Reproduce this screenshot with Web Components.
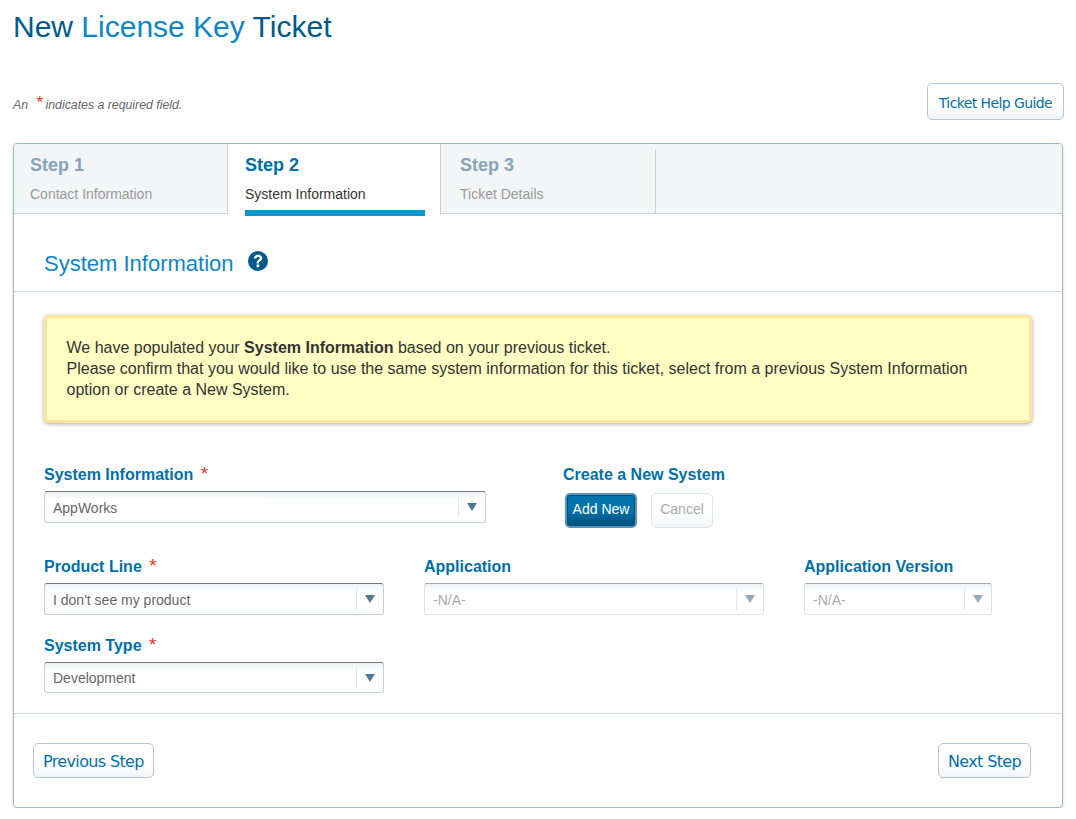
<!DOCTYPE html>
<html lang="en">
<head>
<meta charset="utf-8">
<title>New License Key Ticket</title>
<style>
    html, body { margin: 0; background: #fff; }
    body { font-family: "Liberation Sans", Arial, sans-serif; color: #333; }
</style>
</head>
<body>
<ticket-page>
    <ticket-title slot="title">New <em>License Key</em> Ticket</ticket-title>
    <ticket-button slot="help" size="small">Ticket Help Guide</ticket-button>

    <step-tab step="Step 1" slot="tabs">Contact Information</step-tab>
    <step-tab step="Step 2" slot="tabs" active>System Information</step-tab>
    <step-tab step="Step 3" slot="tabs" last>Ticket Details</step-tab>

    <notice-box slot="notice">
        We have populated your <b>System Information</b> based on your previous ticket.<br>
        Please confirm that you would like to use the same system information for this ticket, select from a previous System Information option or create a New System.
    </notice-box>

    <system-form slot="form"></system-form>

    <ticket-button slot="previous">Previous Step</ticket-button>
    <ticket-button slot="next">Next Step</ticket-button>
</ticket-page>

<script>
class TicketPage extends HTMLElement {
    constructor() {
        super();
        this.attachShadow({ mode: "open" });
        this.shadowRoot.innerHTML = `
            <style>
            :host { display: block; padding: 0 12px 0 13px; width: 1051px; }
            header { height: 83px; }
            .required-row {
                display: flex; justify-content: space-between; align-items: flex-start;
                height: 60px;
            }
            .note {
                font: italic 12.3px/14px "Liberation Sans", Arial, sans-serif;
                color: #666; padding-top: 14px;
            }
            .note span {
                color: #f0311e; font: normal 17px/14px "Liberation Sans", Arial, sans-serif;
                margin: 0 -1px 0 5px; position: relative; top: -1px;
            }
            .panel {
                width: 1048px; height: 663px;
                border: 1px solid #a3b8c4; border-radius: 4px;
                box-shadow: 0 1px 3px rgba(90, 120, 140, .3);
                display: flex; flex-direction: column;
            }
            .tabs {
                display: flex; height: 70px;
                background: #f3f6f7; border-radius: 3px 3px 0 0;
                box-shadow: inset 0 -1px 0 #c5d3dc;
            }
            .section-head {
                height: 78px; box-sizing: border-box;
                border-bottom: 1px solid #d5dade;
                display: flex; align-items: flex-start;
                padding: 37px 0 0 30px; gap: 14px;
            }
            h2 {
                margin: 0; font: 22px/26px "Liberation Sans", Arial, sans-serif;
                color: #0d86c8;
            }
            svg { display: block; }
            .body { padding: 23px 30px 0 30px; height: 422px; box-sizing: border-box; border-bottom: 1px solid #d5dade; }
            .actions { display: flex; justify-content: space-between; padding: 29px 31px 0 19px; }
            </style>
            <header><slot name="title"></slot></header>
            <div class="required-row">
                <div class="note">An <span>*</span> indicates a required field.</div>
                <slot name="help"></slot>
            </div>
            <div class="panel">
                <div class="tabs"><slot name="tabs"></slot></div>
                <div class="section-head">
                    <h2>System Information</h2>
                    <svg width="20" height="20" viewBox="0 0 20 20">
                        <circle cx="10" cy="10" r="10" fill="#005a8c"/>
                        <path transform="translate(10 10) scale(1.2) translate(-10 -9.7)" d="M6.6 7.6c.2-2 1.6-3.1 3.5-3.1 2 0 3.4 1.1 3.4 2.9 0 1.3-.7 2-1.7 2.6-.8.5-1 .8-1 1.7H8.9c-.1-1.4.3-2.1 1.3-2.8.8-.5 1.2-.9 1.2-1.5 0-.7-.5-1.1-1.3-1.1-.9 0-1.4.5-1.5 1.3z M8.8 12.6H11v2.3H8.8z" fill="#fff"/>
                    </svg>
                </div>
                <div class="body">
                    <slot name="notice"></slot>
                    <slot name="form"></slot>
                </div>
                <div class="actions">
                    <slot name="previous"></slot>
                    <slot name="next"></slot>
                </div>
            </div>
        `;
    }
}

class TicketTitle extends HTMLElement {
    constructor() {
        super();
        this.attachShadow({ mode: "open" });
        this.shadowRoot.innerHTML = `
            <style>
            :host {
                display: block; padding-top: 9px;
                font: 30px/36px "Liberation Sans", Arial, sans-serif; color: #005a8c;
            }
            ::slotted(em) { font-style: normal; color: #0d86c8; }
            </style>
            <slot></slot>
        `;
    }
}

class TicketButton extends HTMLElement {
    constructor() {
        super();
        this.attachShadow({ mode: "open" });
        this.shadowRoot.innerHTML = `
            <style>
            :host {
                display: inline-block; box-sizing: border-box;
                height: 35px; padding: 0 9px;
                border: 1px solid #b4c6d3; border-radius: 5px;
                background: linear-gradient(#fff 55%, #f1f5f8);
                color: #0070aa;
                font: 16px/35px "DejaVu Sans", Verdana, sans-serif;
                letter-spacing: -.64px; white-space: nowrap;
            }
            :host([size="small"]) { height: 37px; padding: 0 11px; font-size: 14px; line-height: 38px; letter-spacing: -.6px; }
            :host([primary]) {
                width: 72px; padding: 0; text-align: center;
                font: 14px/29px "Liberation Sans", Arial, sans-serif; letter-spacing: 0;
                color: #fff; border: 2px solid #5a93b5; border-radius: 5px;
                background: linear-gradient(#0274ad 45%, #004f7d);
                box-shadow: inset 0 0 0 1px #02507f;
            }
            :host([disabled]) {
                width: 62px; padding: 0; text-align: center;
                font: 14px/31px "Liberation Sans", Arial, sans-serif; letter-spacing: 0;
                color: #aaa; border-color: #dfe5ea;
            }
            </style>
            <slot></slot>
        `;
    }
}

class StepTab extends HTMLElement {
    constructor() {
        super();
        this.attachShadow({ mode: "open" });
        this.shadowRoot.innerHTML = `
            <style>
            :host {
                display: block; box-sizing: border-box; position: relative;
                width: 214px; height: 70px; padding: 10px 0 0 16px;
                border-right: 1px solid #c5d3dc;
            }
            :host([last]) { width: 215px; margin-top: 5px; height: 64px; padding: 5px 0 0 19px; }
            .step {
                font: bold 18px/22px "Liberation Sans", Arial, sans-serif; color: #8aa3b5;
            }
            .name {
                margin-top: 9px;
                font: 14px/18px "Liberation Sans", Arial, sans-serif; color: #999;
            }
            :host([active]) {
                background: #fff; width: 213px; padding-left: 17px;
                height: 71px;
            }
            :host([active]) .step { color: #0070aa; }
            :host([active]) .name { color: #333; }
            :host([active]) .bar {
                position: absolute; left: 17px; top: 66px;
                width: 180px; height: 6px; background: #0099cc;
            }
            </style>
            <div class="step"></div>
            <div class="name"><slot></slot></div>
            <div class="bar"></div>
        `;
        this.shadowRoot.querySelector(".step").textContent = this.getAttribute("step");
    }
}

class NoticeBox extends HTMLElement {
    constructor() {
        super();
        this.attachShadow({ mode: "open" });
        this.shadowRoot.innerHTML = `
            <style>
            :host {
                display: block; box-sizing: border-box;
                width: 988px; height: 108px; padding: 19px 20px 0 19.5px;
                background: #ffffc4; border: 3px solid #fde59c; border-radius: 5px;
                box-shadow: 0 1px 4px rgba(0, 0, 0, .35);
                font: 16px/21px "Liberation Sans", Arial, sans-serif; color: #333;
            }
            </style>
            <slot></slot>
        `;
    }
}

class FormSelect extends HTMLElement {
    constructor() {
        super();
        this.attachShadow({ mode: "open" });
        this.shadowRoot.innerHTML = `
            <style>
            :host {
                display: flex; box-sizing: border-box; height: 32px;
                border: 1px solid #c9ced2; border-top-color: #777; border-radius: 3px;
                background: linear-gradient(#eef1f2, #fff 8px);
                font: 14px/33px "Liberation Sans", Arial, sans-serif; color: #666;
            }
            :host([disabled]) { border-color: #dfe2e4; border-top-color: #aaa; color: #aaa; }
            .value { flex: 1; padding-left: 8px; white-space: nowrap; overflow: hidden; }
            .arrow {
                width: 26px; margin: 4px 0; border-left: 1px solid #e2e7ea;
                display: flex; align-items: center; justify-content: center;
            }
            .arrow i {
                border: 5px solid transparent; border-width: 8px 5.5px 0;
                border-top-color: #4f7a96;
            }
            :host([disabled]) .arrow i { border-top-color: #8fabbd; }
            </style>
            <div class="value"><slot></slot></div>
            <div class="arrow"><i></i></div>
        `;
    }
}

class FormField extends HTMLElement {
    constructor() {
        super();
        this.attachShadow({ mode: "open" });
        this.shadowRoot.innerHTML = `
            <style>
            :host { display: block; }
            label {
                display: block; height: 27px; box-sizing: border-box; padding-top: 1px;
                font: bold 16px/20px "Liberation Sans", Arial, sans-serif; color: #0070aa;
                white-space: nowrap;
            }
            span {
                color: #f0311e; font: normal 19px/0 "Liberation Sans", Arial, sans-serif;
                margin-left: 3px;
            }
            </style>
            <label></label>
            <slot></slot>
        `;
        const label = this.shadowRoot.querySelector("label");
        label.textContent = this.getAttribute("label");
        if (this.hasAttribute("required")) {
            const star = document.createElement("span");
            star.textContent = "*";
            label.append(" ", star);
        }
    }
}

class SystemForm extends HTMLElement {
    constructor() {
        super();
        this.attachShadow({ mode: "open" });
        this.shadowRoot.innerHTML = `
            <style>
            :host { display: block; padding-top: 41px; }
            .top { display: flex; gap: 77px; height: 92px; }
            .top form-field:first-child { width: 442px; }
            .create { display: flex; gap: 14px; padding: 2px 0 0 2px; }
            .grid { display: grid; grid-template-columns: 340px 340px 188px; column-gap: 40px; }
            .second { margin-top: 20px; width: 340px; }
            .second form-select { height: 31px; line-height: 31px; }
            </style>
            <div class="top">
                <form-field label="System Information" required>
                    <form-select>AppWorks</form-select>
                </form-field>
                <form-field label="Create a New System">
                    <div class="create">
                        <ticket-button primary>Add New</ticket-button>
                        <ticket-button disabled>Cancel</ticket-button>
                    </div>
                </form-field>
            </div>
            <div class="grid">
                <form-field label="Product Line" required>
                    <form-select>I don't see my product</form-select>
                </form-field>
                <form-field label="Application">
                    <form-select disabled>-N/A-</form-select>
                </form-field>
                <form-field label="Application Version">
                    <form-select disabled>-N/A-</form-select>
                </form-field>
            </div>
            <form-field class="second" label="System Type" required>
                <form-select>Development</form-select>
            </form-field>
        `;
    }
}

customElements.define("ticket-page", TicketPage);
customElements.define("ticket-title", TicketTitle);
customElements.define("ticket-button", TicketButton);
customElements.define("step-tab", StepTab);
customElements.define("notice-box", NoticeBox);
customElements.define("form-select", FormSelect);
customElements.define("form-field", FormField);
customElements.define("system-form", SystemForm);
</script>
</body>
</html>
